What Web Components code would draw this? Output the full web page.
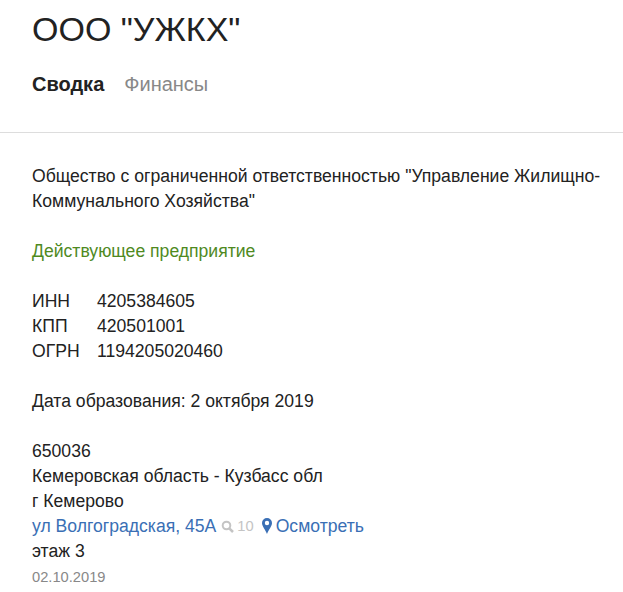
<!DOCTYPE html>
<html lang="ru">
<head>
<meta charset="utf-8">
<style>
  html, body { margin: 0; padding: 0; background: #fff; overflow: hidden; }
  body { font-family: "Liberation Sans", Arial, sans-serif; color: #222; }
</style>
</head>
<body>
<company-header name='ООО "УЖКХ"'>
  <tab-link active>Сводка</tab-link>
  <tab-link>Финансы</tab-link>
</company-header>
<company-summary>
  <p-block>Общество с ограниченной ответственностью "Управление Жилищно-Коммунального Хозяйства"</p-block>
  <p-block class="status" style="color:#4f8a1f">Действующее предприятие</p-block>
  <p-block>
    <code-row label="ИНН">4205384605</code-row>
    <code-row label="КПП">420501001</code-row>
    <code-row label="ОГРН">1194205020460</code-row>
  </p-block>
  <p-block>Дата образования: 2 октября 2019</p-block>
  <p-block>
    <div>650036</div>
    <div>Кемеровская область - Кузбасс обл</div>
    <div>г Кемерово</div>
    <address-line street="ул Волгоградская, 45А" count="10" action="Осмотреть"></address-line>
    <div>этаж 3</div>
    <div style="color:#888;font-size:14.7px;line-height:27px">02.10.2019</div>
  </p-block>
</company-summary>
<script>
class CompanyHeader extends HTMLElement {
  constructor() {
    super();
    this.attachShadow({ mode: "open" });
  }
  connectedCallback() {
    this.shadowRoot.innerHTML = `
    <style>
      :host { display: block; border-bottom: 1px solid #ddd; padding: 7px 32px 35px; }
      h1 { margin: 0; font-size: 34px; line-height: 44px; font-weight: 400; color: #222; }
      nav { display: flex; gap: 20px; margin-top: 20px; }
    </style>
    <h1></h1>
    <nav><slot></slot></nav>`;
    this.shadowRoot.querySelector("h1").textContent = this.getAttribute("name");
  }
}
customElements.define("company-header", CompanyHeader);

class TabLink extends HTMLElement {
  constructor() {
    super();
    this.attachShadow({ mode: "open" });
  }
  connectedCallback() {
    this.shadowRoot.innerHTML = `
    <style>
      :host { display: block; font-size: 20px; line-height: 26px; color: #888; }
      :host([active]) { font-weight: 700; color: #222; }
    </style>
    <slot></slot>`;
  }
}
customElements.define("tab-link", TabLink);

class CompanySummary extends HTMLElement {
  constructor() {
    super();
    this.attachShadow({ mode: "open" });
  }
  connectedCallback() {
    this.shadowRoot.innerHTML = `
    <style>
      :host { display: flex; flex-direction: column; gap: 25px; padding: 31px 18px 0 32px; font-size: 17.6px; line-height: 25px; }
    </style>
    <slot></slot>`;
  }
}
customElements.define("company-summary", CompanySummary);

class PBlock extends HTMLElement {
  constructor() {
    super();
    this.attachShadow({ mode: "open" });
    this.shadowRoot.innerHTML = `<style>:host { display: block; }</style><slot></slot>`;
  }
}
customElements.define("p-block", PBlock);

class CodeRow extends HTMLElement {
  constructor() {
    super();
    this.attachShadow({ mode: "open" });
  }
  connectedCallback() {
    this.shadowRoot.innerHTML = `
    <style>
      :host { display: grid; grid-template-columns: 65px auto; }
    </style>
    <span>${this.getAttribute("label")}</span><span><slot></slot></span>`;
  }
}
customElements.define("code-row", CodeRow);

class AddressLine extends HTMLElement {
  constructor() {
    super();
    this.attachShadow({ mode: "open" });
  }
  connectedCallback() {
    this.shadowRoot.innerHTML = `
    <style>
      :host { display: flex; align-items: center; color: #3a6fb5; }
      .count { display: inline-flex; align-items: center; gap: 3px; margin-left: 5px; color: #c4c4c4; font-size: 14.7px; }
      .go { display: inline-flex; align-items: center; gap: 4px; margin-left: 8px; }
      svg { display: block; }
    </style>
    <span>${this.getAttribute("street")}</span>
    <span class="count">
      <svg width="13" height="13" viewBox="0 0 13 13" fill="none" stroke="#c4c4c4" stroke-width="2"><circle cx="5.500" cy="5.500" r="3.800"/><path d="M8.300 8.300 12 12" stroke-width="2.500"/></svg>
      ${this.getAttribute("count")}
    </span>
    <span class="go">
      <svg width="10" height="16" viewBox="0 0 10 16" style="margin-top:-2px"><path fill="#3a6fb5" fill-rule="evenodd" d="M5 16C3.500 11.500 0 8.500 0 5a5 5 0 0 1 10 0c0 3.500-3.500 6.500-5 11zM5 2.800a2.200 2.200 0 1 0 0 4.400 2.200 2.200 0 0 0 0-4.400z"/></svg>
      ${this.getAttribute("action")}
    </span>`;
  }
}
customElements.define("address-line", AddressLine);
</script>
</body>
</html>
